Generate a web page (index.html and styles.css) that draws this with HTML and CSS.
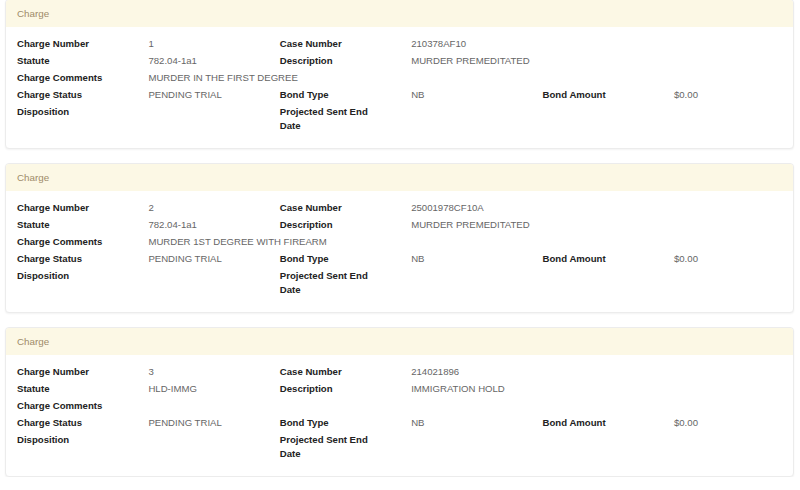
FILE: index.html
```html
<!DOCTYPE html>
<html lang="en">
<head>
    <meta charset="UTF-8">
    <title>Charges</title>
    <link rel="stylesheet" href="styles.css">
</head>
<body>
    <div class="charges">
        <div class="panel">
            <div class="panel-heading">Charge</div>
            <div class="panel-body">
                <div class="field">Charge Number</div><div class="value">1</div>
                <div class="field">Case Number</div><div class="value">210378AF10</div>
                <div></div><div></div>
                <div class="field">Statute</div><div class="value">782.04-1a1</div>
                <div class="field">Description</div><div class="value">MURDER PREMEDITATED</div>
                <div></div><div></div>
                <div class="field">Charge Comments</div><div class="value wide">MURDER IN THE FIRST DEGREE</div>
                <div class="field">Charge Status</div><div class="value">PENDING TRIAL</div>
                <div class="field">Bond Type</div><div class="value">NB</div>
                <div class="field">Bond Amount</div><div class="value">$0.00</div>
                <div class="field">Disposition</div><div class="value"></div>
                <div class="field">Projected Sent End Date</div><div class="value"></div>
            </div>
        </div>

        <div class="panel">
            <div class="panel-heading">Charge</div>
            <div class="panel-body">
                <div class="field">Charge Number</div><div class="value">2</div>
                <div class="field">Case Number</div><div class="value">25001978CF10A</div>
                <div></div><div></div>
                <div class="field">Statute</div><div class="value">782.04-1a1</div>
                <div class="field">Description</div><div class="value">MURDER PREMEDITATED</div>
                <div></div><div></div>
                <div class="field">Charge Comments</div><div class="value wide">MURDER 1ST DEGREE WITH FIREARM</div>
                <div class="field">Charge Status</div><div class="value">PENDING TRIAL</div>
                <div class="field">Bond Type</div><div class="value">NB</div>
                <div class="field">Bond Amount</div><div class="value">$0.00</div>
                <div class="field">Disposition</div><div class="value"></div>
                <div class="field">Projected Sent End Date</div><div class="value"></div>
            </div>
        </div>

        <div class="panel">
            <div class="panel-heading">Charge</div>
            <div class="panel-body">
                <div class="field">Charge Number</div><div class="value">3</div>
                <div class="field">Case Number</div><div class="value">214021896</div>
                <div></div><div></div>
                <div class="field">Statute</div><div class="value">HLD-IMMG</div>
                <div class="field">Description</div><div class="value">IMMIGRATION HOLD</div>
                <div></div><div></div>
                <div class="field">Charge Comments</div><div class="value wide"></div>
                <div class="field">Charge Status</div><div class="value">PENDING TRIAL</div>
                <div class="field">Bond Type</div><div class="value">NB</div>
                <div class="field">Bond Amount</div><div class="value">$0.00</div>
                <div class="field">Disposition</div><div class="value"></div>
                <div class="field">Projected Sent End Date</div><div class="value"></div>
            </div>
        </div>
    </div>
</body>
</html>
```

FILE: styles.css
```css
body {
    font-family: "Liberation Sans", Arial, sans-serif;
    font-size: 9.6px;
    margin: 0;
    padding: 0;
    background-color: #ffffff;
    color: #333333;
}
.charges {
    display: flex;
    flex-direction: column;
    gap: 14px;
    margin: -1px 6px 0 5px;
}
.panel {
    border: 1px solid #ececec;
    border-radius: 4px;
    box-shadow: 0 1px 2px rgba(0, 0, 0, 0.05);
    background: #ffffff;
    overflow: hidden;
}
.panel-heading {
    background: #fcf8e5;
    color: #9e8b69;
    height: 27px;
    line-height: 27px;
    padding: 0 11px;
    font-size: 9.8px;
}
.panel-body {
    display: grid;
    grid-template-columns: repeat(6, 131.4px);
    row-gap: 3px;
    padding: 10px 0 15px 11px;
    line-height: 14px;
    min-height: 96px;
}
.field {
    font-weight: bold;
    color: #222222;
    padding-right: 30px;
}
.value {
    color: #666666;
    padding-right: 30px;
    white-space: nowrap;
}
.value.wide {
    grid-column: span 5;
}
```
